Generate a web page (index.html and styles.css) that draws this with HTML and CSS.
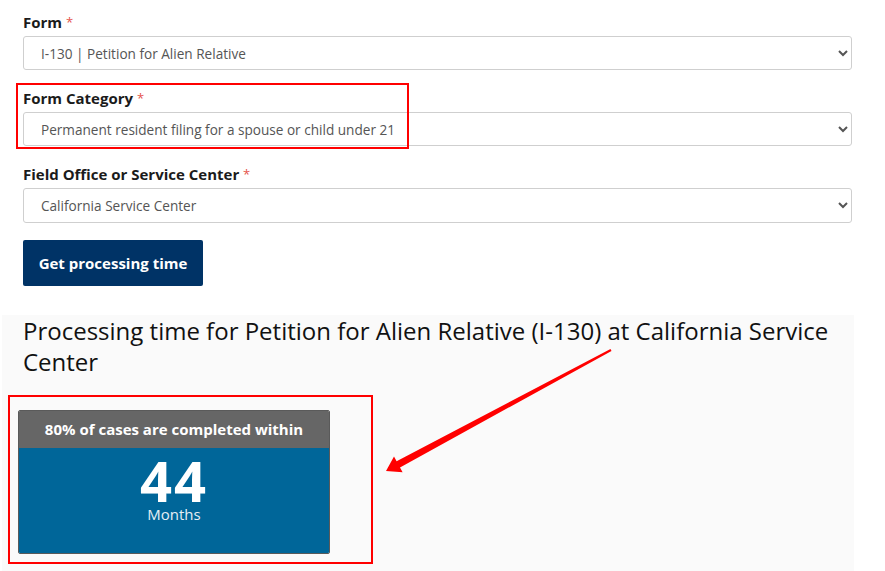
FILE: index.html
```html
<!DOCTYPE html>
<html lang="en">
<head>
    <meta charset="UTF-8">
    <meta name="viewport" content="width=device-width, initial-scale=1.0">
    <title>Check Case Processing Times</title>
    <link rel="stylesheet" href="styles.css">
</head>
<body>

    <div class="page">
        <form class="lookup">
            <div class="field">
                <label for="form">Form <span class="req">*</span></label>
                <select id="form">
                    <option>I-130 | Petition for Alien Relative</option>
                </select>
            </div>

            <div class="field">
                <label for="category">Form Category <span class="req">*</span></label>
                <select id="category">
                    <option>Permanent resident filing for a spouse or child under 21</option>
                </select>
            </div>

            <div class="field">
                <label for="office">Field Office or Service Center <span class="req">*</span></label>
                <select id="office">
                    <option>California Service Center</option>
                </select>
            </div>

            <button type="button">Get processing time</button>
        </form>

        <div class="results">
            <h2>Processing time for Petition for Alien Relative (I-130) at California Service Center</h2>

            <div class="time-card">
                <div class="time-card-head">80% of cases are completed within</div>
                <div class="time-card-body">
                    <div class="time-value">44</div>
                    <div class="time-unit">Months</div>
                </div>
            </div>
        </div>

        <!-- annotations drawn over the screenshot -->
        <div class="mark mark-category"></div>
        <div class="mark mark-card"></div>
        <svg class="arrow" width="885" height="571" viewBox="0 0 885 571">
            <polygon fill="#f00" points="386,471 394,456.5 396.6,461.3 610.5,349.1 611.5,350.9 400,467.5 402.6,472.3"/>
        </svg>
    </div>

</body>
</html>
```

FILE: styles.css
```css
* {
    box-sizing: border-box;
}

body {
    margin: 0;
    background-color: #ffffff;
    font-family: "Open Sans", Lato, Arial, sans-serif;
    color: #1b1b1b;
}

.page {
    position: relative;
    height: 571px;
    overflow: hidden;
}

.lookup {
    padding: 12px 33px 0 23px;
}

.field {
    margin-bottom: 18px;
}

label {
    display: block;
    font-size: 15px;
    font-weight: bold;
    line-height: 20px;
    margin-bottom: 4px;
}

.req {
    color: #e5544b;
    font-weight: normal;
    font-size: 13px;
    vertical-align: top;
}

select {
    display: block;
    width: 100%;
    height: 34px;
    padding: 0 10px 0 13px;
    border: 1px solid #cfcfcf;
    border-radius: 3px;
    background-color: #ffffff;
    color: #555555;
    font-family: inherit;
    font-size: 13.6px;
}

#office {
    height: 35px;
}

button {
    margin-top: -1px;
    height: 46px;
    width: 180px;
    border: none;
    border-radius: 2px;
    background-color: #003366;
    color: #ffffff;
    font-family: inherit;
    font-size: 15px;
    font-weight: bold;
}

.results {
    margin: 31px 31px 0 2px;
    padding: 0 16px 40px;
    background-color: #fafafa;
    height: 300px;
}

.results h2 {
    margin: -2px 0 0;
    padding-left: 5px;
    font-size: 24px;
    font-weight: normal;
    line-height: 31px;
    color: #111111;
}

.time-card {
    margin-top: 33px;
    width: 312px;
    border: 1px solid #5a5a5a;
    border-radius: 2px;
    overflow: hidden;
    text-align: center;
    color: #ffffff;
}

.time-card-head {
    height: 37px;
    line-height: 37px;
    background-color: #666666;
    font-size: 15px;
    font-weight: bold;
}

.time-card-body {
    height: 105px;
    padding-top: 9px;
    background-color: #006699;
}

.time-value {
    font-size: 56px;
    font-weight: bold;
    line-height: 46px;
    letter-spacing: 2px;
}

.time-unit {
    margin-top: 2px;
    font-size: 15px;
    line-height: 18px;
    color: #e6eef5;
}

.mark {
    position: absolute;
    border: 2px solid #f00;
}

.mark-category {
    left: 16px;
    top: 83px;
    width: 393px;
    height: 66px;
}

.mark-card {
    left: 8px;
    top: 395px;
    width: 365px;
    height: 169px;
}

.arrow {
    position: absolute;
    left: 0;
    top: 0;
}
```
